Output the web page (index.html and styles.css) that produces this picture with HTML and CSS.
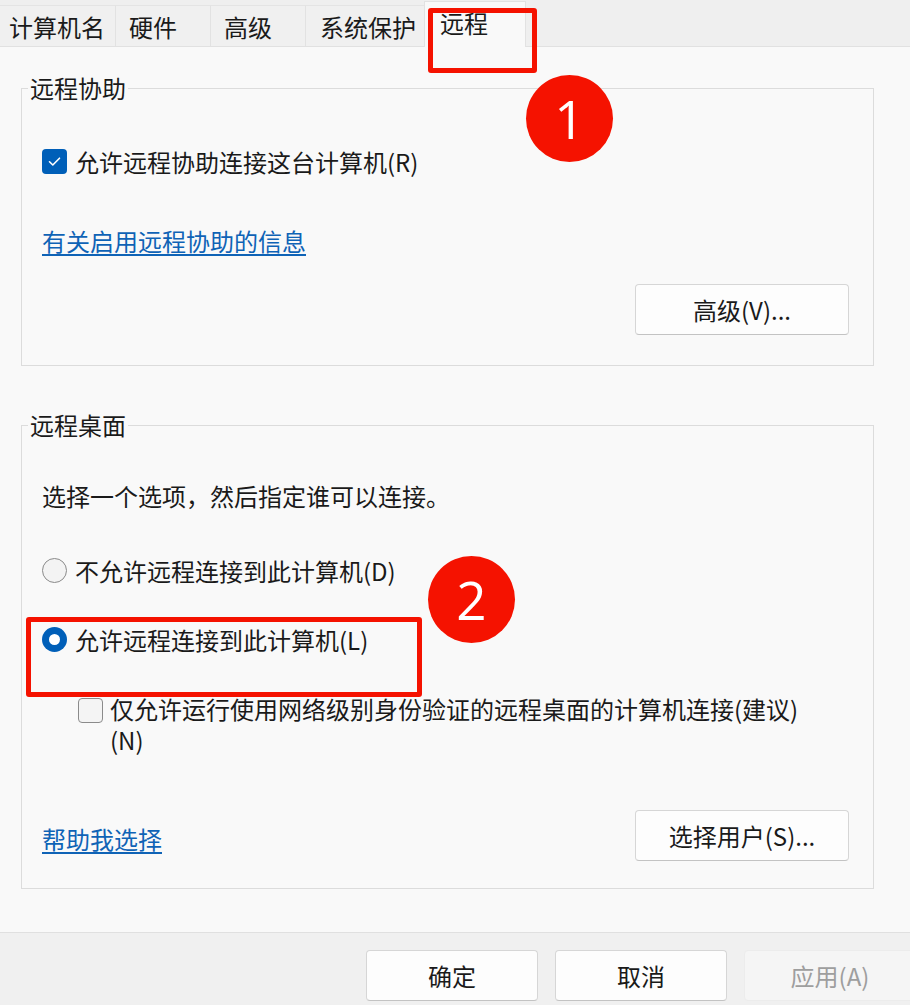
FILE: index.html
```html
<!DOCTYPE html>
<html lang="zh-CN">
<head>
<meta charset="utf-8">
<title>系统属性 - 远程</title>
<link rel="stylesheet" href="styles.css">
</head>
<body>
<div class="window">
  <div class="tabs">
    <div class="tab tab-first">计算机名</div>
    <div class="tab tab-w95">硬件</div>
    <div class="tab tab-w95">高级</div>
    <div class="tab tab-w119">系统保护</div>
    <div class="tab tab-active">远程</div>
  </div>

  <div class="content">
    <fieldset class="group group-assist">
      <legend>远程协助</legend>
      <div class="group-body body-assist">
        <div class="row">
          <span class="cb cb-checked">
            <svg width="25" height="25" viewBox="0 0 25 25"><polyline points="7.5,12.8 10.8,16 17.5,9.2" fill="none" stroke="#fff" stroke-width="1.6" stroke-linecap="round" stroke-linejoin="round"/></svg>
          </span>
          <span class="label">允许远程协助连接这台计算机(R)</span>
        </div>
        <a class="link link-info" href="#">有关启用远程协助的信息</a>
        <div class="btn-row">
          <button class="btn">高级(V)...</button>
        </div>
      </div>
    </fieldset>

    <fieldset class="group group-desktop">
      <legend>远程桌面</legend>
      <div class="group-body body-desktop">
        <div class="text">选择一个选项，然后指定谁可以连接。</div>
        <div class="row row-radio1">
          <span class="radio"></span>
          <span class="label">不允许远程连接到此计算机(D)</span>
        </div>
        <div class="row row-radio2">
          <span class="radio radio-on"><span class="dot"></span></span>
          <span class="label">允许远程连接到此计算机(L)</span>
        </div>
        <div class="row row-nla">
          <span class="cb cb-empty"></span>
          <span class="label label-wrap">仅允许运行使用网络级别身份验证的远程桌面的计算机连接(建议)(N)</span>
        </div>
        <div class="bottom-row">
          <a class="link link-help" href="#">帮助我选择</a>
          <button class="btn">选择用户(S)...</button>
        </div>
      </div>
    </fieldset>
  </div>

  <div class="footer">
    <button class="btn btn-foot">确定</button>
    <button class="btn btn-foot">取消</button>
    <button class="btn btn-foot btn-disabled">应用(A)</button>
  </div>

  <div class="mark mark-tab"></div>
  <div class="mark mark-radio"></div>
  <div class="badge badge-1">1</div>
  <div class="badge badge-2">2</div>
</div>
</body>
</html>
```

FILE: styles.css
```css
* { box-sizing: border-box; }

html, body {
  margin: 0;
  padding: 0;
  background: #f9f9f9;
}

body {
  font-family: "Noto Sans CJK SC", "Noto Sans", sans-serif;
  font-size: 24px;
  color: #1a1a1a;
}

.window {
  position: relative;
  width: 910px;
  height: 1005px;
  overflow: hidden;
  display: flex;
  flex-direction: column;
}

/* Tabs */
.tabs {
  height: 47px;
  flex: none;
  display: flex;
  align-items: flex-end;
  background: #efefef;
  border-bottom: 1px solid #e1e1e1;
}

.tab {
  height: 41px;
  padding: 6px 0 0 13px;
  line-height: 30px;
  background: #f0f0f0;
  border-top: 1px solid #e4e4e4;
  border-right: 1px solid #e2e2e2;
  white-space: nowrap;
}

.tab-first { width: 116px; padding-left: 9px; }
.tab-w95 { width: 95px; }
.tab-w119 { width: 119px; padding-left: 14px; }

.tab-active {
  width: 102px;
  height: 46px;
  margin-bottom: -1px;
  padding-left: 15px;
  padding-top: 6px;
  background: #f9f9f9;
  border-left: 1px solid #e2e2e2;
  border-right: 1px solid #e2e2e2;
  border-top: 1px solid #e2e2e2;
  margin-left: -1px;
}

/* Content */
.content {
  flex: 1;
  padding: 27px 36px 0 21px;
  background: #f9f9f9;
}

.group {
  margin: 0;
  padding: 0;
  border: 1px solid #dcdcdc;
  min-width: 0;
}

.group legend {
  margin-left: 6px;
  padding: 0 2px;
  line-height: 28px;
  font-size: 24px;
  color: #1a1a1a;
}

.group-desktop { margin-top: 45px; }

.group-body {
  display: flex;
  flex-direction: column;
  align-items: flex-start;
  padding-left: 20px;
  padding-right: 24px;
}

.body-assist { padding-top: 44px; padding-bottom: 30px; }
.body-desktop { padding-top: 41px; padding-bottom: 27px; }

.row {
  display: flex;
  align-items: center;
  gap: 8px;
  line-height: 31px;
}

.text { line-height: 31px; }

.row-radio1 { margin-top: 44px; }
.row-radio2 { margin-top: 38px; }

.row-nla {
  margin-top: 38px;
  margin-left: 36px;
  align-items: flex-start;
  gap: 7px;
}

.row-nla .cb { margin-top: 5px; }

.label-wrap { max-width: 705px; }

.cb {
  flex: none;
  width: 25px;
  height: 25px;
  border-radius: 4px;
  display: inline-flex;
}

.cb-checked { background: #005fb8; }

.cb-empty {
  background: #f4f4f4;
  border: 1.5px solid #8b8b8b;
}

.radio {
  flex: none;
  width: 25px;
  height: 25px;
  border-radius: 50%;
  background: #f3f3f3;
  border: 1.5px solid #8a8a8a;
  display: inline-flex;
  align-items: center;
  justify-content: center;
}

.radio-on {
  background: #005fb8;
  border: none;
}

.radio-on .dot {
  width: 11px;
  height: 11px;
  border-radius: 50%;
  background: #ffffff;
}

.link {
  color: #0f63b6;
  text-decoration: underline;
  text-underline-offset: 3px;
  text-decoration-thickness: 1.5px;
  line-height: 31px;
}

.link-info { margin-top: 48px; }

.btn-row {
  align-self: stretch;
  display: flex;
  justify-content: flex-end;
  margin-top: 28px;
}

.btn {
  width: 214px;
  height: 51px;
  padding: 0;
  font-family: inherit;
  font-size: 24px;
  color: #1a1a1a;
  background: #fdfdfd;
  border: 1px solid #d6d6d6;
  border-bottom-color: #c3c3c3;
  border-radius: 4px;
  line-height: 1;
}

.bottom-row {
  align-self: stretch;
  display: flex;
  justify-content: space-between;
  align-items: center;
  margin-top: 55px;
}

.link-help { padding-top: 6px; }

/* Footer */
.footer {
  flex: none;
  height: 73px;
  background: #f0f0f0;
  border-top: 1px solid #e0e0e0;
  padding-top: 17px;
  display: flex;
  justify-content: flex-end;
  align-items: flex-start;
  gap: 17px;
}

.btn-foot { width: 172px; }

.btn-disabled {
  color: #9e9e9e;
  background: #f5f5f5;
  border-color: #ececec;
  margin-right: -6px;
}

/* Annotations */
.mark {
  position: absolute;
  border: 5px solid #f51200;
  border-radius: 3px;
}

.mark-tab { left: 428px; top: 8px; width: 109px; height: 65px; }
.mark-radio { left: 26px; top: 617px; width: 396px; height: 80px; }

.badge {
  position: absolute;
  width: 87px;
  height: 87px;
  border-radius: 50%;
  background: #f51200;
  color: #ffffff;
  font-family: "Open Sans", "Liberation Sans", sans-serif;
  font-size: 53px;
  line-height: 87px;
  text-align: center;
}

.badge-1 { left: 526px; top: 75px; }
.badge-2 { left: 428px; top: 556px; }
```
